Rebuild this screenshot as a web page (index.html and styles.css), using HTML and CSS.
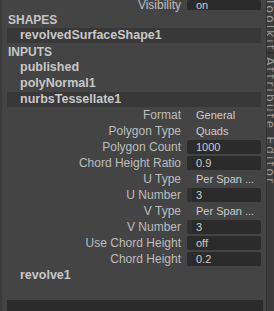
FILE: index.html
```html
<!DOCTYPE html>
<html lang="en">
<head>
  <meta charset="UTF-8">
  <title>Attribute Editor</title>
  <link rel="stylesheet" href="styles.css">
</head>
<body>
  <div class="editor">
    <div class="panel">
      <div class="attr attr-first">
        <span class="label">Visibility</span>
        <span class="field">on</span>
      </div>

      <div class="section">SHAPES</div>
      <div class="node selected">revolvedSurfaceShape1</div>

      <div class="section">INPUTS</div>
      <div class="node">published</div>
      <div class="node">polyNormal1</div>
      <div class="node selected">nurbsTessellate1</div>

      <div class="attr">
        <span class="label">Format</span>
        <span class="option">General</span>
      </div>
      <div class="attr">
        <span class="label">Polygon Type</span>
        <span class="option">Quads</span>
      </div>
      <div class="attr">
        <span class="label">Polygon Count</span>
        <span class="field">1000</span>
      </div>
      <div class="attr">
        <span class="label">Chord Height Ratio</span>
        <span class="field">0.9</span>
      </div>
      <div class="attr">
        <span class="label">U Type</span>
        <span class="option">Per Span ...</span>
      </div>
      <div class="attr">
        <span class="label">U Number</span>
        <span class="field slider">3</span>
      </div>
      <div class="attr">
        <span class="label">V Type</span>
        <span class="option">Per Span ...</span>
      </div>
      <div class="attr">
        <span class="label">V Number</span>
        <span class="field slider">3</span>
      </div>
      <div class="attr">
        <span class="label">Use Chord Height</span>
        <span class="field">off</span>
      </div>
      <div class="attr">
        <span class="label">Chord Height</span>
        <span class="field">0.2</span>
      </div>

      <div class="node">revolve1</div>

      <div class="footer"></div>
    </div>

    <div class="tabs">
      <div class="tab tab-top"><span>Modeling Toolkit</span></div>
      <div class="tab">Attribute Editor</div>
    </div>
  </div>
</body>
</html>
```

FILE: styles.css
```css
html, body {
  margin: 0;
  height: 100%;
  overflow: hidden;
  background-color: #444444;
}

body {
  font-family: "Liberation Sans", Arial, sans-serif;
  font-size: 12px;
  color: #bdbdbd;
}

.editor {
  display: flex;
  height: 311px;
  width: 274px;
  overflow: hidden;
}

.panel {
  width: 264px;
  flex-shrink: 0;
  border-left: 2px solid #3b3b3b;
  display: flex;
  flex-direction: column;
}

/* attribute rows */
.attr {
  display: grid;
  grid-template-columns: 179px 74px;
  column-gap: 6px;
  height: 14px;
  margin-bottom: 2px;
  line-height: 14px;
}

.attr-first {
  height: 10px;
  line-height: 10px;
}

.label {
  text-align: right;
  white-space: nowrap;
}

.field,
.option {
  font-size: 11px;
  color: #cccccc;
  padding-left: 9px;
  white-space: nowrap;
}

.field {
  background-color: #2b2b2b;
  border-radius: 2px;
}

.field.slider {
  padding-left: 4px;
  border-left: 5px solid #313131;
}

/* outliner style rows */
.section {
  height: 16px;
  line-height: 17px;
  padding-left: 6px;
  font-weight: bold;
  color: #c6c6c6;
}

.node {
  height: 15px;
  margin-bottom: 1px;
  margin-left: 5px;
  margin-right: 5px;
  padding-left: 13px;
  line-height: 15px;
  font-size: 12.5px;
  font-weight: bold;
  color: #c8c8c8;
}

.node.selected {
  background-color: #383838;
}

.footer {
  margin: 16px 3px 0 5px;
  flex: 1;
  background-color: #2b2b2b;
}

/* docked tab strip on the right */
.tabs {
  width: 7px;
  flex-shrink: 0;
  background-color: #3c3c3c;
  border-left: 1px solid #333333;
  display: flex;
  flex-direction: column;
  overflow: hidden;
}

.tab {
  writing-mode: vertical-rl;
  font-family: "DejaVu Sans", sans-serif;
  font-size: 12.5px;
  letter-spacing: 2px;
  line-height: 8px;
  color: #979797;
  white-space: nowrap;
  padding-top: 3px;
}

.tab-top {
  height: 52px;
  flex-shrink: 0;
  padding-top: 0;
  border-bottom: 2px solid #2f2f2f;
  display: flex;
  justify-content: flex-end;
  overflow: hidden;
}

.tab-top span {
  flex-shrink: 0;
}
```
